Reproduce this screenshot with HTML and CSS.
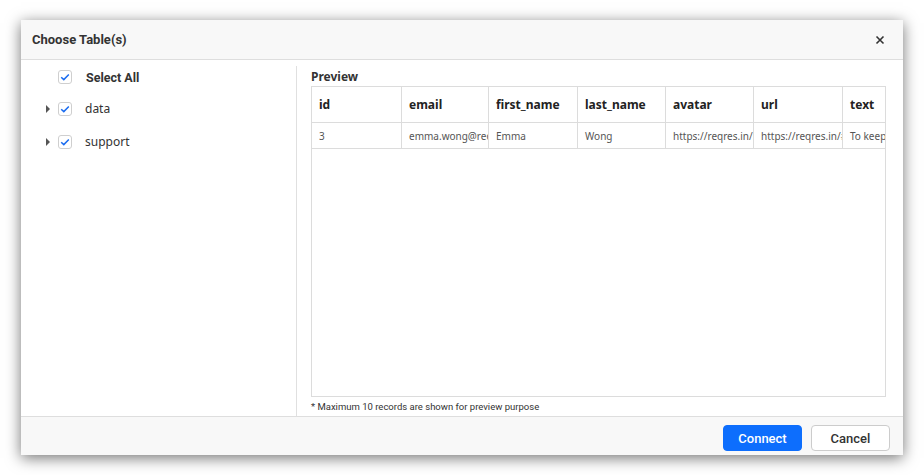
FILE: index.html
```html
<!DOCTYPE html>
<html>
<head>
<meta charset="utf-8">
<link rel="stylesheet" href="styles.css">
</head>
<body>
<div class="dialog">
  <div class="dlg-header">
    <span class="dlg-title">Choose Table(s)</span>
    <span class="dlg-close">
      <svg width="10" height="10" viewBox="0 0 10 10"><path d="M1.5 1.5L8.5 8.5M8.5 1.5L1.5 8.5" stroke="#333" stroke-width="1.6" fill="none"/></svg>
    </span>
  </div>
  <div class="dlg-body">
    <div class="tree">
      <div class="tree-row all">
        <span class="caret hidden"></span>
        <span class="cb"><svg width="10" height="8" viewBox="0 0 10 8"><path d="M1.2 4.2L3.8 6.6L8.8 1.4" stroke="#1a6cf0" stroke-width="1.5" fill="none"/></svg></span>
        <span class="label bold">Select All</span>
      </div>
      <div class="tree-row">
        <span class="caret"></span>
        <span class="cb"><svg width="10" height="8" viewBox="0 0 10 8"><path d="M1.2 4.2L3.8 6.6L8.8 1.4" stroke="#1a6cf0" stroke-width="1.5" fill="none"/></svg></span>
        <span class="label">data</span>
      </div>
      <div class="tree-row">
        <span class="caret"></span>
        <span class="cb"><svg width="10" height="8" viewBox="0 0 10 8"><path d="M1.2 4.2L3.8 6.6L8.8 1.4" stroke="#1a6cf0" stroke-width="1.5" fill="none"/></svg></span>
        <span class="label">support</span>
      </div>
    </div>
    <div class="preview">
      <div class="preview-title">Preview</div>
      <div class="grid-wrap">
        <table class="grid">
          <colgroup>
            <col style="width:90px"><col style="width:87px"><col style="width:89px"><col style="width:88px"><col style="width:88px"><col style="width:89px"><col style="width:88px">
          </colgroup>
          <thead>
            <tr><th>id</th><th>email</th><th>first_name</th><th>last_name</th><th>avatar</th><th>url</th><th>text</th></tr>
          </thead>
          <tbody>
            <tr><td>3</td><td>emma.wong@reqres.in</td><td>Emma</td><td>Wong</td><td>https://reqres.in/img/faces/3-image.jpg</td><td>https://reqres.in/#support-heading</td><td>To keep ReqRes free</td></tr>
          </tbody>
        </table>
      </div>
      <div class="note">* Maximum 10 records are shown for preview purpose</div>
    </div>
  </div>
  <div class="dlg-footer">
    <button class="btn primary">Connect</button>
    <button class="btn">Cancel</button>
  </div>
</div>
</body>
</html>
```
FILE: styles.css
```css
html, body {
  margin: 0;
  padding: 0;
  background: #ffffff;
}
body {
  padding: 20px 0 20px 21px;
  font-family: Roboto, "Liberation Sans", sans-serif;
}
.dialog {
  width: 882px;
  height: 435px;
  background: #fff;
  box-shadow: 0 3px 14px rgba(0, 0, 0, 0.55);
  display: flex;
  flex-direction: column;
}
.dlg-header {
  height: 39px;
  flex: none;
  background: #f8f8f8;
  border-bottom: 1px solid #dedede;
  display: flex;
  align-items: center;
  justify-content: space-between;
  padding: 0 18px 0 11px;
}
.dlg-title {
  font-size: 13px;
  font-weight: 700;
  color: #333;
}
.dlg-close {
  display: flex;
  width: 10px;
  height: 10px;
}
.dlg-body {
  flex: 1;
  display: flex;
  min-height: 0;
}
.tree {
  width: 276px;
  flex: none;
  border-right: 1px solid #e0e0e0;
  margin-top: 6px;
  padding-top: 2px;
  box-sizing: border-box;
}
.tree-row {
  height: 33px;
  display: flex;
  align-items: center;
  padding-left: 25px;
}
.tree-row.all {
  height: 16px;
  margin-bottom: 7px;
  margin-top: 1px;
}
.caret {
  width: 0;
  height: 0;
  border-top: 4px solid transparent;
  border-bottom: 4px solid transparent;
  border-left: 4px solid #555;
  margin-right: 8px;
}
.caret.hidden {
  visibility: hidden;
}
.cb {
  width: 12px;
  height: 12px;
  border: 1px solid #cfcfcf;
  border-radius: 3px;
  background: #fff;
  display: flex;
  align-items: center;
  justify-content: center;
}
.label {
  margin-left: 13px;
  font-family: "Noto Sans", "Open Sans", sans-serif;
  font-size: 12px;
  color: #333;
}
.label.bold {
  font-family: Roboto, sans-serif;
  font-weight: 700;
  font-size: 12.5px;
  margin-left: 14px;
}
.preview {
  flex: 1;
  display: flex;
  flex-direction: column;
  padding: 7px 17px 0 14px;
  min-width: 0;
}
.preview-title {
  font-family: "Noto Sans", sans-serif;
  font-weight: 700;
  font-size: 12px;
  color: #333;
  height: 19px;
  line-height: 19px;
}
.grid-wrap {
  height: 309px;
  border: 1px solid #dcdcdc;
  overflow: hidden;
}
.grid {
  border-collapse: collapse;
  table-layout: fixed;
  width: 619px;
  margin: -1px 0 0 -1px;
}
.grid th, .grid td {
  border: 1px solid #dcdcdc;
  text-align: left;
  white-space: nowrap;
  overflow: hidden;
  padding: 0 0 0 7px;
  font-family: "Noto Sans", "Open Sans", sans-serif;
}
.grid th {
  height: 35px;
  font-size: 12px;
  font-weight: 700;
  color: #222;
  background: #fff;
}
.grid td {
  height: 25px;
  font-size: 10px;
  color: #555;
}
.note {
  font-family: Roboto, sans-serif;
  font-size: 9.5px;
  color: #333;
  padding-top: 4px;
}
.dlg-footer {
  height: 39px;
  flex: none;
  box-sizing: border-box;
  background: #f8f8f8;
  border-top: 1px solid #dedede;
  display: flex;
  align-items: flex-start;
  justify-content: flex-end;
  gap: 9px;
  padding: 8px 13px 0;
}
.btn {
  width: 79px;
  height: 26px;
  border-radius: 4px;
  border: 1px solid #cccccc;
  background: #fff;
  color: #333;
  font-family: Roboto, sans-serif;
  font-size: 13px;
  font-weight: 500;
  padding: 0;
}
.btn.primary {
  background: #0d6efd;
  border-color: #0d6efd;
  color: #fff;
}
```
